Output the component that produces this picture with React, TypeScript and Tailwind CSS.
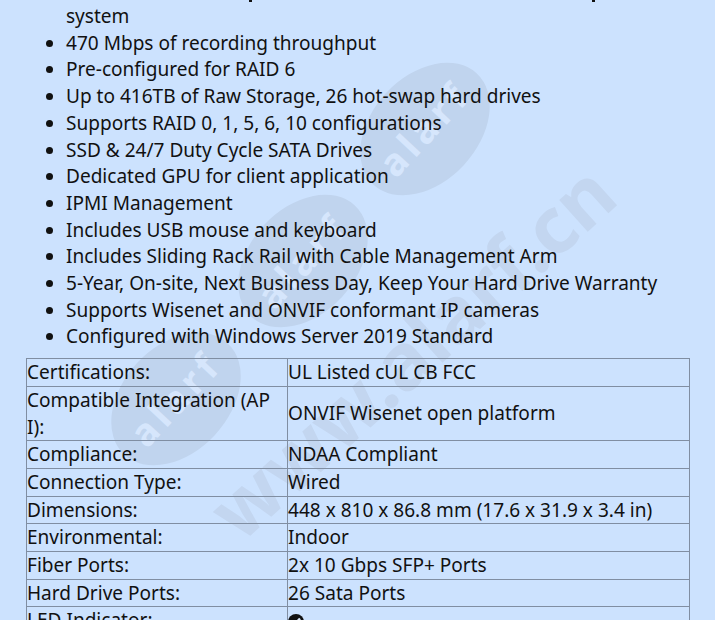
import type { ReactNode } from 'react';

const items = [
  '470 Mbps of recording throughput',
  'Pre-configured for RAID 6',
  'Up to 416TB of Raw Storage, 26 hot-swap hard drives',
  'Supports RAID 0, 1, 5, 6, 10 configurations',
  'SSD & 24/7 Duty Cycle SATA Drives',
  'Dedicated GPU for client application',
  'IPMI Management',
  'Includes USB mouse and keyboard',
  'Includes Sliding Rack Rail with Cable Management Arm',
  '5-Year, On-site, Next Business Day, Keep Your Hard Drive Warranty',
  'Supports Wisenet and ONVIF conformant IP cameras',
  'Configured with Windows Server 2019 Standard',
];

function CheckBadge() {
  return (
    <svg viewBox="0 0 16 16" className="mt-[2px] block h-4 w-4">
      <circle cx="8" cy="8" r="8" fill="#111" />
      <path d="M3.5 7.5l3 3L12 4.5" fill="none" stroke="#d8e6f8" strokeWidth="2.4" />
    </svg>
  );
}

const rows: [ReactNode, ReactNode][] = [
  ['Certifications:', 'UL Listed cUL CB FCC'],
  [
    <>
      Compatible Integration (AP
      <br />
      I):
    </>,
    'ONVIF Wisenet open platform',
  ],
  ['Compliance:', 'NDAA Compliant'],
  ['Connection Type:', 'Wired'],
  ['Dimensions:', '448 x 810 x 86.8 mm (17.6 x 31.9 x 3.4 in)'],
  ['Environmental:', 'Indoor'],
  ['Fiber Ports:', '2x 10 Gbps SFP+ Ports'],
  ['Hard Drive Ports:', '26 Sata Ports'],
  ['LED Indicator:', <CheckBadge />],
];

const ovals = [
  { cx: 425, cy: 129, rx: 76, ry: 53 },
  { cx: 176, cy: 399, rx: 76, ry: 53 },
  { cx: 303, cy: 261, rx: 76, ry: 53 },
];

// diagonal site watermark that sits behind the page content
function Watermark() {
  return (
    <svg viewBox="0 0 715 620" className="absolute inset-0 h-[620px] w-[715px]">
      {ovals.map((o) => (
        <g key={o.cx} transform={`translate(${o.cx} ${o.cy}) rotate(-47)`}>
          <ellipse rx={o.rx} ry={o.ry} fill="#c0d4ee" />
          <text
            y="13"
            textAnchor="middle"
            fontFamily="Noto Sans"
            fontWeight="700"
            fontSize="38"
            letterSpacing="5"
            fill="#d6e6fc"
          >
            alarf
          </text>
        </g>
      ))}
      <text
        transform="translate(431 373) rotate(-42)"
        textAnchor="middle"
        fontFamily="Noto Sans"
        fontWeight="700"
        fontSize="78"
        fill="#c3d6f0"
      >
        www.alarf.cn
      </text>
      <rect x="249" y="0" width="3" height="2" fill="#111" />
      <rect x="592" y="0" width="3" height="2" fill="#111" />
    </svg>
  );
}

export default function App() {
  return (
    <div className="relative h-[620px] overflow-hidden bg-[#cce2fe] font-['Noto_Sans','Open_Sans',sans-serif] text-[19.06px] leading-[26.7px] text-[#111]">
      <Watermark />
      <div className="relative">
        <ul className="list-disc pl-[66px] pt-[3px]">
          <li className="list-none">system</li>
          {items.map((item) => (
            <li key={item}>{item}</li>
          ))}
        </ul>
        <table className="ml-[26px] mt-[8px] w-[664px] table-fixed border-collapse">
          <tbody>
            {rows.map(([label, value], i) => (
              <tr key={i}>
                <td className="w-[261px] border border-[#808ea2] align-middle">{label}</td>
                <td className="border border-[#808ea2] align-middle">{value}</td>
              </tr>
            ))}
          </tbody>
        </table>
      </div>
    </div>
  );
}
